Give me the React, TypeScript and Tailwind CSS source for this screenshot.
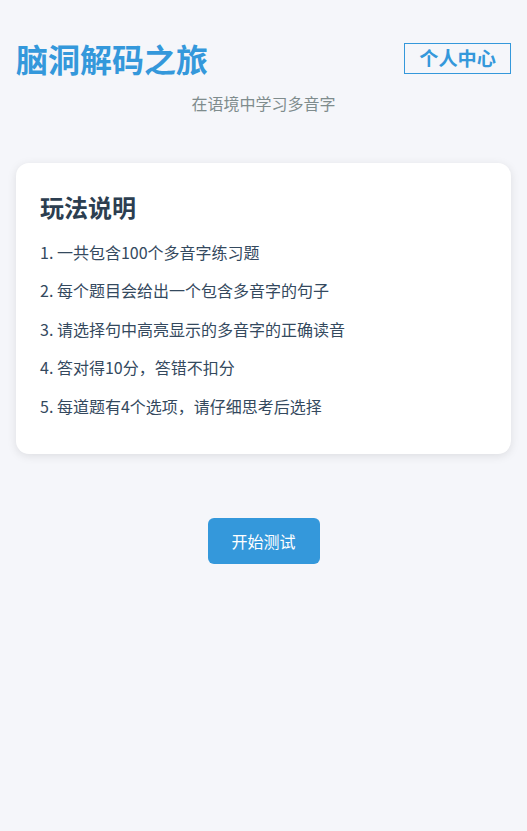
import React from "react";

const rules = [
  "1. 一共包含100个多音字练习题",
  "2. 每个题目会给出一个包含多音字的句子",
  "3. 请选择句中高亮显示的多音字的正确读音",
  "4. 答对得10分，答错不扣分",
  "5. 每道题有4个选项，请仔细思考后选择",
];

function Header() {
  return (
    <div className="pt-[39px]">
      <div className="flex items-center justify-between">
        <h1 className="text-[32px] leading-[38px] font-bold text-[#3498db]">
          脑洞解码之旅
        </h1>
        <button className="border border-[#3498db] px-[14px] py-[3px] text-[19.2px] leading-[23px] font-bold text-[#3498db]">
          个人中心
        </button>
      </div>
      <p className="mt-[14px] text-center text-base leading-6 text-[#7f8c8d]">
        在语境中学习多音字
      </p>
    </div>
  );
}

function RulesCard() {
  return (
    <div className="mt-[48px] rounded-[13px] bg-white px-6 pt-[24px] pb-[35px] shadow-[0_2px_10px_rgba(0,0,0,0.1)]">
      <h2 className="text-2xl leading-[40px] font-bold text-[#2c3e50]">玩法说明</h2>
      <ul className="mt-[13px] flex flex-col gap-[12.8px]">
        {rules.map((rule, index) => (
          <li key={index} className="text-base leading-[25.6px] text-[#34495e]">
            {rule}
          </li>
        ))}
      </ul>
    </div>
  );
}

export default function App() {
  return (
    <div
      className="min-h-screen bg-[#f5f6fa] px-4"
      style={{ fontFamily: '"Noto Sans CJK SC", "Noto Sans", sans-serif' }}
    >
      <Header />
      <RulesCard />
      <div className="mt-[64px] flex justify-center">
        <button className="h-[46px] w-[112px] rounded-[6px] bg-[#3498db] text-base text-white">
          开始测试
        </button>
      </div>
    </div>
  );
}
